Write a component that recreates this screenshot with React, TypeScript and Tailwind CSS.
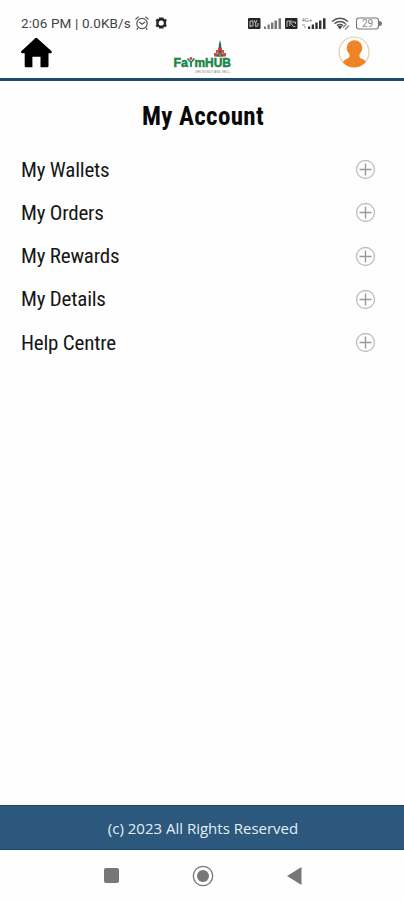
const rows = ["My Wallets", "My Orders", "My Rewards", "My Details", "Help Centre"];

function StatusBar() {
  return (
    <div className="flex h-[34px] items-start pt-[15px] pl-[21px] text-[#444]">
      <span className="w-[111px] whitespace-nowrap text-[13.5px] leading-[17px] tracking-[0.12px]">2:06 PM | 0.0KB/s</span>
      <svg className="ml-[2px] h-4 w-4" viewBox="0 0 16 16" fill="none" stroke="#555" strokeWidth="1.2">
        <circle cx="8" cy="8.5" r="5.2" />
        <path d="M5.3 7 8 9.3 11 7M1.4 4.4 4.6 1.7M14.6 4.4l-3.2-2.7M4 13l-1.3 1.6M12 13l1.3 1.6" />
      </svg>
      <svg className="ml-[3px] h-4 w-4" viewBox="0 0 16 16">
        <circle cx="8.2" cy="8" r="3.8" fill="none" stroke="#252525" strokeWidth="2.4" />
        <path d="M6 2.5h4.4v2H6zM6 11.5h4.4v2H6zM2.8 4.8l2-1.2v3l-2-.3zM13.6 4.8l-2-1.2v3l2-.3zM2.8 11.2l2 1.2v-3l-2 .3zM13.6 11.2l-2 1.2v-3l2 .3z" fill="#252525" />
      </svg>
      <svg className="ml-[78px] h-[18px] w-[138px]" viewBox="0 0 138 18">
        <rect x="1" y="3" width="12.5" height="11" rx="1" fill="#252525" />
        <path d="M3 12V6h3v5H3M7 5l1.6 3L10 5M8.7 8v3.7l2.3-1V8" fill="none" stroke="#e6e6e6" strokeWidth=".8" />
        <path fill="#777" d="M17 11.5h2v2.5h-2zM20.5 9.5h2.2V14h-2.2zM24 7.6h2.4V14H24zM27.5 5.6H30V14h-2.5zM31.5 3.3H34V14h-2.5z" />
        <rect x="38" y="3" width="12.5" height="11" rx="1" fill="#252525" />
        <path d="M40 12V6h2.8v5M44 5v3.5l2.4 3h2M45 7h3.4v2" fill="none" stroke="#e6e6e6" strokeWidth=".8" />
        <text x="54.5" y="7" fontSize="6" fill="#777">4G+</text>
        <path d="M55 10h3M57 12h2" stroke="#999" />
        <path fill="#333" d="M61 11.5h2.2V14H61zM64.7 9.5H67V14h-2.3zM68.3 7.6h2.4V14h-2.4zM72 5.6h2.4V14H72zM76 3.3h2.5V14H76z" />
        <path d="M85 6.500q8-6.500 16 0M87.500 8.600q5.500-4.300 11 0M90 10.600q3-2.200 6 0" fill="none" stroke="#555" strokeWidth="1.600" />
        <path d="m93 14.500-2.300-3q2.200-1.500 4.500 0z" fill="#444" />
        <path d="m96 12.500 3.500-3.500M98 14.500l4-4" stroke="#888" strokeWidth="1.400" />
        <rect x="109.5" y="3" width="22" height="11" rx="2.5" fill="none" stroke="#777" strokeWidth="1.1" />
        <path d="M132 6q3 0 3 2.5t-3 2.5z" fill="#777" />
        <text x="115" y="12" fontSize="10" fill="#888">29</text>
      </svg>
    </div>
  );
}

function Logo() {
  return (
    <svg className="h-9 w-[62px]" viewBox="0 0 62 36" fontFamily="Liberation Sans, Arial, sans-serif">
      <path d="M42 17.500v-3.500h2v-3h2V8.500h4V11h2v3h2v3.500z" fill="#cc4a4a" />
      <path d="M46.800 9V5.500L48 1l1.200 4.500V9zM48 9.500l1.500 4.500h-3zM44.500 17.500l2-3.500 1.500 3.500zM51.500 17.500l-2-3.500-1.500 3.500z" fill="#2d704b" />
      <path d="M45 14.200h1.200M50 14.200h1.200M47.500 16h1" stroke="#fff" strokeWidth=".8" />
      <g fill="#16864a" stroke="#16864a" strokeWidth=".5" fontSize="12" fontWeight="700">
        <text x="1.500" y="28" textLength="14.500" lengthAdjust="spacingAndGlyphs">Fa</text>
        <text x="22.500" y="28" textLength="36.500" lengthAdjust="spacingAndGlyphs">mHUB</text>
      </g>
      <path d="m15.500 19.500 3.500 4v4.500m0-4.500 3.500-4" fill="none" stroke="#278653" strokeWidth="1.800" />
      <circle cx="19" cy="19.500" r="1.400" fill="#d23f3f" />
      <text x="23" y="33.800" fontSize="3" fill="#888" textLength="35" lengthAdjust="spacingAndGlyphs">GROW BUY AND SELL</text>
    </svg>
  );
}

function Header() {
  return (
    <header className="flex h-[47px] items-start justify-between border-b-[3px] border-[#1d4c6d] pr-[34px] pl-[20px]">
      <svg className="mt-[3px] h-8 w-8" viewBox="0 0 32 32">
        <path d="M15.2 1.2q1-.8 2 0L31.4 14q1 1.2-.3 2.2h-2.6V29q0 1.200-1.200 1.200h-6.800V19.800h-8.100v10.400H6q-1.300 0-1.300-1.300V16.200H2q-1.700-.7-.7-2z" fill="#000" />
      </svg>
      <div className="mt-[5px] mr-[4px] ml-[20px]"><Logo /></div>
      <svg className="mt-[2px] h-8 w-8" viewBox="0 0 32 32">
        <circle cx="16" cy="16" r="15" fill="#fff" stroke="#e6cda6" strokeWidth="1.2" />
        <circle cx="16.5" cy="12" r="7.8" fill="#ef8426" />
        <path d="M11.500 17h10v4q.8 1.300 3 2 2.800 1 3.300 3.200A15.500 15.500 0 0 1 5 26.500q.5-2.500 3.400-3.500 2.400-.8 3.100-2z" fill="#ef8426" />
      </svg>
    </header>
  );
}

function AccountRow({ label }: { label: string }) {
  return (
    <div className="flex h-[43.25px] items-center justify-between pr-[28px] pl-[21px]">
      <span className="font-stretch-condensed text-[21px] leading-7 tracking-[-0.2px] text-[#161616]">{label}</span>
      <svg className="h-[21px] w-[21px]" viewBox="0 0 21 21" fill="none">
        <circle cx="10.5" cy="10.5" r="9" stroke="#bcbcbc" strokeWidth="1.3" />
        <path d="M4.5 10.5h12M10.5 4.5v12" stroke="#999" strokeWidth="1.4" />
      </svg>
    </div>
  );
}

export default function App() {
  return (
    <div className="flex h-[900px] w-[404px] flex-col overflow-hidden bg-[#fefefe] font-[Roboto,sans-serif]">
      <StatusBar />
      <Header />
      <main className="flex-1">
        <h1 className="mt-[20px] mb-[15px] pl-[2px] text-center text-[25px] leading-8 font-bold font-stretch-condensed tracking-[0.35px] text-[#080808]">My Account</h1>
        {rows.map(label => <AccountRow key={label} label={label} />)}
      </main>
      <footer className="flex h-[45px] items-center justify-center border-y border-[#164b6d] bg-[#2b587c] pt-[2px] pl-[2px] font-['Open_Sans',sans-serif] text-[15px] text-[#e5eef5]">
        (c) 2023 All Rights Reserved
      </footer>
      <nav className="flex h-[50px] items-center justify-between pt-[1px] pr-[102px] pl-[104px]">
        <div className="h-[15px] w-[15px] rounded-[2px] bg-[#777]" />
        <svg className="h-[22px] w-[22px]" viewBox="0 0 22 22">
          <circle cx="11" cy="11" r="9.7" fill="none" stroke="#777" strokeWidth="1.3" />
          <circle cx="11" cy="11" r="6" fill="#777" />
        </svg>
        <svg className="h-[18px] w-[15px]" viewBox="0 0 15 18">
          <path d="M0 9 14.5 0v18z" fill="#777" />
        </svg>
      </nav>
    </div>
  );
}
